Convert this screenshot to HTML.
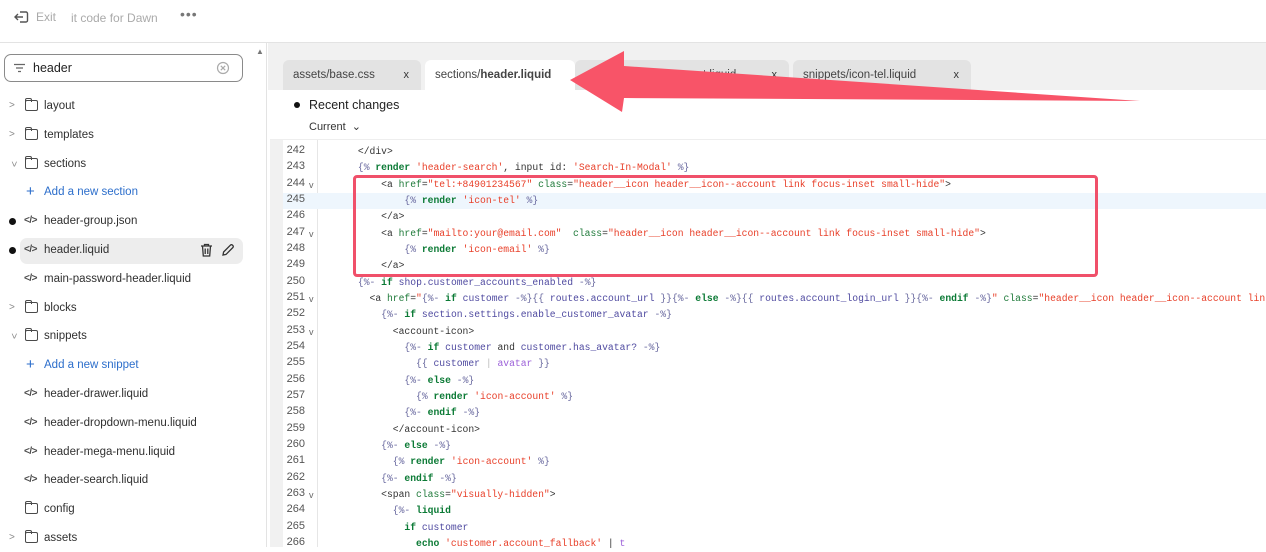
<!DOCTYPE html>
<html><head><meta charset="utf-8"><style>
*{margin:0;padding:0;box-sizing:border-box}
body{width:1266px;height:547px;overflow:hidden;background:#fff;font-family:"Liberation Sans",sans-serif;position:relative;color:#303030}
.top{position:absolute;left:0;top:0;width:1266px;height:43px;border-bottom:1px solid #e3e3e3;background:#fff}
.side{position:absolute;left:0;top:43px;width:267px;height:504px;border-right:1px solid #e3e3e3;background:#fff}
.row{position:absolute;left:0;height:24px;font-size:11.5px;line-height:24px;color:#303030;white-space:nowrap}
.row .t{position:absolute;left:44px}
.chev{position:absolute;left:9px;top:0;font-size:10px;color:#8a8a8a}
.fold{position:absolute;left:25px;top:6px;width:13px;height:11px;border:1.3px solid #4a4a4a;border-radius:2px}
.fold:before{content:"";position:absolute;left:-1.3px;top:-3.5px;width:5px;height:3px;border:1.3px solid #4a4a4a;border-bottom:none;border-radius:2px 2px 0 0}
.code{position:absolute;left:24px;top:0;font-size:10px;font-weight:bold;color:#4a4a4a;letter-spacing:-0.5px}
.dot{position:absolute;left:9px;top:9px;width:7px;height:7px;border-radius:50%;background:#111}
.blue{color:#2c6ecb}
.tabs{position:absolute;left:268px;top:43px;width:998px;height:47px;background:#f1f1f1}
.tab{position:absolute;top:17px;height:30px;background:#e3e3e3;border-radius:6px 6px 0 0;font-size:11.5px;line-height:30px;padding-left:10px;color:#444;white-space:nowrap}
.tab .x{position:absolute;right:12px;top:0;font-size:11px;color:#333}
.ed{position:absolute;left:268px;top:90px;width:998px;height:457px;background:#fff}
.gut{position:absolute;left:270px;top:140px;width:13px;height:407px;background:#f1f1f1}
.gl{position:absolute;left:317px;top:140px;width:1px;height:407px;background:#e6e6e6}
.ln{position:absolute;left:283px;width:22px;text-align:right;font-family:"Liberation Sans",sans-serif;font-size:11px;color:#555}
.fv{position:absolute;left:309px;font-size:9px;color:#666}
.cl{position:absolute;left:323px;width:943px;overflow:hidden;font-family:"Liberation Mono",monospace;font-size:9.7px;white-space:pre;color:#333;height:16px;line-height:16px}
.g{color:#1f7a3a}.k{color:#0b7a35;font-weight:bold}.r{color:#e8402a}.p{color:#4f4aa0}.d{color:#6a6aa0}.v{color:#9b5fd8}
</style></head><body>
<div class="top">
<svg style="position:absolute;left:14px;top:10px" width="16" height="14" viewBox="0 0 16 14"><path d="M6 2H12a1.5 1.5 0 0 1 1.5 1.5v7A1.5 1.5 0 0 1 12 12H6M1 7h8M4 4L1 7l3 3" fill="none" stroke="#555" stroke-width="1.4"/></svg>
<span style="position:absolute;left:36px;top:10px;font-size:12px;color:#aaa">Exit</span>
<span style="position:absolute;left:71px;top:11px;font-size:12px;color:#aaa">it code for Dawn</span>
<span style="position:absolute;left:180px;top:6px;font-size:14px;color:#777;letter-spacing:1px">•••</span>
</div>
<div class="side">
<span style="position:absolute;left:256px;top:4px;font-size:8px;color:#777">▲</span>
<div style="position:absolute;left:4px;top:11px;width:239px;height:28px;border:1px solid #8a8a8a;border-radius:7px"></div>
<svg style="position:absolute;left:13px;top:20px" width="13" height="10"><path d="M1 1.5h11M3 5h7M5 8.5h3" stroke="#666" stroke-width="1.3"/></svg>
<span style="position:absolute;left:33px;top:18px;font-size:12.5px;color:#222">header</span>
<svg style="position:absolute;left:216px;top:18px" width="14" height="14"><circle cx="7" cy="7" r="5.5" fill="none" stroke="#aaa" stroke-width="1.2"/><path d="M4.8 4.8l4.4 4.4M9.2 4.8l-4.4 4.4" stroke="#aaa" stroke-width="1.2"/></svg>
</div>
<div class="row" style="top:94px;width:267px"><span class="chev">&gt;</span><span class="fold"></span><span class="t">layout</span></div>
<div class="row" style="top:123px;width:267px"><span class="chev">&gt;</span><span class="fold"></span><span class="t">templates</span></div>
<div class="row" style="top:152px;width:267px"><span class="chev" style="transform:rotate(90deg);left:10px">&gt;</span><span class="fold"></span><span class="t">sections</span></div>
<div class="row blue" style="top:180px;width:267px"><span style="position:absolute;left:26px;font-size:15px">+</span><span class="t">Add a new section</span></div>
<div class="row" style="top:209px;width:267px"><span class="dot"></span><span class="code">&lt;/&gt;</span><span class="t">header-group.json</span></div>
<div style="position:absolute;left:20px;top:238px;width:223px;height:26px;background:#ededed;border-radius:7px"></div>
<div class="row" style="top:238px;width:267px"><span class="dot"></span><span class="code">&lt;/&gt;</span><span class="t">header.liquid</span>
<svg style="position:absolute;left:200px;top:5px" width="13" height="14"><path d="M1 3h11M4.5 3V1.5h4V3M2.5 3l.8 10h6.4l.8-10M5.2 5.5v5.5M7.8 5.5v5.5" fill="none" stroke="#333" stroke-width="1.3"/></svg>
<svg style="position:absolute;left:221px;top:5px" width="14" height="14"><path d="M2 12l.6-3L9.5 2.1a1.3 1.3 0 0 1 1.9 0l.5.5a1.3 1.3 0 0 1 0 1.9L5 11.4z" fill="none" stroke="#333" stroke-width="1.3"/></svg></div>
<div class="row" style="top:267px;width:267px"><span class="code">&lt;/&gt;</span><span class="t">main-password-header.liquid</span></div>
<div class="row" style="top:296px;width:267px"><span class="chev">&gt;</span><span class="fold"></span><span class="t">blocks</span></div>
<div class="row" style="top:324px;width:267px"><span class="chev" style="transform:rotate(90deg);left:10px">&gt;</span><span class="fold"></span><span class="t">snippets</span></div>
<div class="row blue" style="top:353px;width:267px"><span style="position:absolute;left:26px;font-size:15px">+</span><span class="t">Add a new snippet</span></div>
<div class="row" style="top:382px"><span class="code">&lt;/&gt;</span><span class="t">header-drawer.liquid</span></div>
<div class="row" style="top:411px"><span class="code">&lt;/&gt;</span><span class="t">header-dropdown-menu.liquid</span></div>
<div class="row" style="top:440px"><span class="code">&lt;/&gt;</span><span class="t">header-mega-menu.liquid</span></div>
<div class="row" style="top:468px"><span class="code">&lt;/&gt;</span><span class="t">header-search.liquid</span></div>
<div class="row" style="top:497px"><span class="fold"></span><span class="t">config</span></div>
<div class="row" style="top:526px"><span class="chev">&gt;</span><span class="fold"></span><span class="t">assets</span></div>

<div class="tabs">
<div class="tab" style="left:15px;width:138px">assets/base.css<span class="x">x</span></div>
<div class="tab" style="left:157px;width:150px;background:#fff;height:31px">sections/<b>header.liquid</b></div>
<div class="tab" style="left:307px;width:214px"><span style="position:absolute;left:128px">t.liquid</span><span class="x">x</span></div>
<div class="tab" style="left:525px;width:178px">snippets/icon-tel.liquid<span class="x">x</span></div>
</div>
<div class="ed"></div>
<div style="position:absolute;left:294px;top:102px;width:6px;height:6px;border-radius:50%;background:#111"></div>
<span style="position:absolute;left:309px;top:98px;font-size:12.5px;color:#222">Recent changes</span>
<span style="position:absolute;left:309px;top:120px;font-size:11px;color:#333">Current &nbsp;⌄</span>
<div style="position:absolute;left:270px;top:139px;width:996px;height:1px;background:#eee"></div>
<div class="gut"></div><div class="gl"></div>
<div style="position:absolute;left:283px;top:193px;width:983px;height:16px;background:#eef6fd"></div>

<div class="ln" style="top:144px">242</div><div class="cl" style="top:144px">      &lt;/div&gt;</div>
<div class="ln" style="top:160px">243</div><div class="cl" style="top:160px">      <span class="d">{%</span> <span class="k">render</span> <span class="r">'header-search'</span>, input id: <span class="r">'Search-In-Modal'</span> <span class="d">%}</span></div>
<div class="ln" style="top:177px">244</div><div class="fv" style="top:180px">v</div><div class="cl" style="top:177px">          &lt;a <span class="g">href</span>=<span class="r">"tel:+84901234567"</span> <span class="g">class</span>=<span class="r">"header__icon header__icon--account link focus-inset small-hide"</span>&gt;</div>
<div class="ln" style="top:193px">245</div><div class="cl" style="top:193px">              <span class="d">{%</span> <span class="k">render</span> <span class="r">'icon-tel'</span> <span class="d">%}</span></div>
<div class="ln" style="top:209px">246</div><div class="cl" style="top:209px">          &lt;/a&gt;</div>
<div class="ln" style="top:226px">247</div><div class="fv" style="top:229px">v</div><div class="cl" style="top:226px">          &lt;a <span class="g">href</span>=<span class="r">"mailto:your@email.com"</span>  <span class="g">class</span>=<span class="r">"header__icon header__icon--account link focus-inset small-hide"</span>&gt;</div>
<div class="ln" style="top:242px">248</div><div class="cl" style="top:242px">              <span class="d">{%</span> <span class="k">render</span> <span class="r">'icon-email'</span> <span class="d">%}</span></div>
<div class="ln" style="top:258px">249</div><div class="cl" style="top:258px">          &lt;/a&gt;</div>
<div class="ln" style="top:275px">250</div><div class="cl" style="top:275px">      <span class="d">{%-</span> <span class="k">if</span> <span class="p">shop.customer_accounts_enabled</span> <span class="d">-%}</span></div>
<div class="ln" style="top:291px">251</div><div class="fv" style="top:294px">v</div><div class="cl" style="top:291px">        &lt;a <span class="g">href</span>=<span class="r">"</span><span class="d">{%-</span> <span class="k">if</span> <span class="p">customer</span> <span class="d">-%}{{</span> <span class="p">routes.account_url</span> <span class="d">}}{%-</span> <span class="k">else</span> <span class="d">-%}{{</span> <span class="p">routes.account_login_url</span> <span class="d">}}{%-</span> <span class="k">endif</span> <span class="d">-%}</span><span class="r">"</span> <span class="g">class</span>=<span class="r">"header__icon header__icon--account link focus-inset</span></div>
<div class="ln" style="top:307px">252</div><div class="cl" style="top:307px">          <span class="d">{%-</span> <span class="k">if</span> <span class="p">section.settings.enable_customer_avatar</span> <span class="d">-%}</span></div>
<div class="ln" style="top:324px">253</div><div class="fv" style="top:327px">v</div><div class="cl" style="top:324px">            &lt;account-icon&gt;</div>
<div class="ln" style="top:340px">254</div><div class="cl" style="top:340px">              <span class="d">{%-</span> <span class="k">if</span> <span class="p">customer</span> and <span class="p">customer.has_avatar?</span> <span class="d">-%}</span></div>
<div class="ln" style="top:356px">255</div><div class="cl" style="top:356px">                <span class="d">{{</span> <span class="p">customer</span> <span style="color:#bbb">|</span> <span class="v">avatar</span> <span class="d">}}</span></div>
<div class="ln" style="top:373px">256</div><div class="cl" style="top:373px">              <span class="d">{%-</span> <span class="k">else</span> <span class="d">-%}</span></div>
<div class="ln" style="top:389px">257</div><div class="cl" style="top:389px">                <span class="d">{%</span> <span class="k">render</span> <span class="r">'icon-account'</span> <span class="d">%}</span></div>
<div class="ln" style="top:405px">258</div><div class="cl" style="top:405px">              <span class="d">{%-</span> <span class="k">endif</span> <span class="d">-%}</span></div>
<div class="ln" style="top:422px">259</div><div class="cl" style="top:422px">            &lt;/account-icon&gt;</div>
<div class="ln" style="top:438px">260</div><div class="cl" style="top:438px">          <span class="d">{%-</span> <span class="k">else</span> <span class="d">-%}</span></div>
<div class="ln" style="top:454px">261</div><div class="cl" style="top:454px">            <span class="d">{%</span> <span class="k">render</span> <span class="r">'icon-account'</span> <span class="d">%}</span></div>
<div class="ln" style="top:471px">262</div><div class="cl" style="top:471px">          <span class="d">{%-</span> <span class="k">endif</span> <span class="d">-%}</span></div>
<div class="ln" style="top:487px">263</div><div class="fv" style="top:490px">v</div><div class="cl" style="top:487px">          &lt;span <span class="g">class</span>=<span class="r">"visually-hidden"</span>&gt;</div>
<div class="ln" style="top:503px">264</div><div class="cl" style="top:503px">            <span class="d">{%-</span> <span class="k">liquid</span></div>
<div class="ln" style="top:520px">265</div><div class="cl" style="top:520px">              <span class="k">if</span> <span class="p">customer</span></div>
<div class="ln" style="top:536px">266</div><div class="cl" style="top:536px">                <span class="k">echo</span> <span class="r">'customer.account_fallback'</span> | <span class="v">t</span></div>

<div style="position:absolute;left:353px;top:175px;width:745px;height:102px;border:3px solid #f0506a;border-radius:4px"></div>
<svg style="position:absolute;left:0;top:0" width="1266" height="547"><polygon points="570,80 624,51 624,66 1140,101 624,98 622,112" fill="#f85468"/></svg>
</body></html>
